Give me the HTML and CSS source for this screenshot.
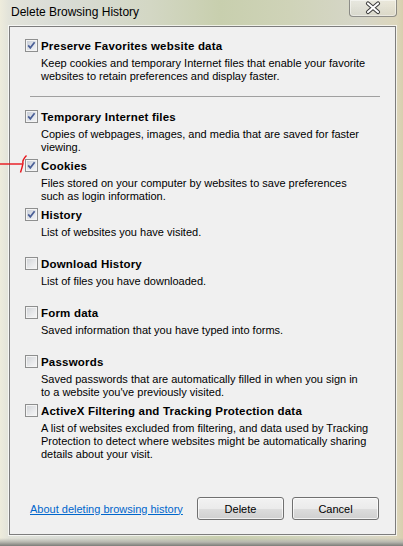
FILE: index.html
```html
<!DOCTYPE html>
<html>
<head>
<meta charset="utf-8">
<link rel="stylesheet" href="styles.css">
</head>
<body>
<div class="window">
  <div class="titlebar">
    <span class="title">Delete Browsing History</span>
    <div class="close">
      <svg width="46" height="16" viewBox="0 0 46 16">
        <path d="M18 3.5 L28 12 M28 3.5 L18 12" stroke="#3a3a3a" stroke-width="4.2" stroke-linecap="round" fill="none"/>
        <path d="M18 3.5 L28 12 M28 3.5 L18 12" stroke="#ffffff" stroke-width="2.2" stroke-linecap="round" fill="none"/>
      </svg>
    </div>
  </div>
  <div class="client">
    <div class="item">
      <span class="cb checked"><svg width="11" height="11" viewBox="0 0 11 11"><path d="M2.2 5.4 L4.3 7.8 L8.6 2.2" stroke="#4a5f97" stroke-width="1.7" fill="none"/></svg></span>
      <div class="label">Preserve Favorites website data</div>
      <div class="desc">Keep cookies and temporary Internet files that enable your favorite<br>websites to retain preferences and display faster.</div>
    </div>
    <div class="sep"></div>
    <div class="item">
      <span class="cb checked"><svg width="11" height="11" viewBox="0 0 11 11"><path d="M2.2 5.4 L4.3 7.8 L8.6 2.2" stroke="#4a5f97" stroke-width="1.7" fill="none"/></svg></span>
      <div class="label">Temporary Internet files</div>
      <div class="desc">Copies of webpages, images, and media that are saved for faster<br>viewing.</div>
    </div>
    <div class="item">
      <span class="cb checked"><svg width="11" height="11" viewBox="0 0 11 11"><path d="M2.2 5.4 L4.3 7.8 L8.6 2.2" stroke="#4a5f97" stroke-width="1.7" fill="none"/></svg></span>
      <div class="label">Cookies</div>
      <div class="desc">Files stored on your computer by websites to save preferences<br>such as login information.</div>
    </div>
    <div class="item">
      <span class="cb checked"><svg width="11" height="11" viewBox="0 0 11 11"><path d="M2.2 5.4 L4.3 7.8 L8.6 2.2" stroke="#4a5f97" stroke-width="1.7" fill="none"/></svg></span>
      <div class="label">History</div>
      <div class="desc">List of websites you have visited.</div>
    </div>
    <div class="item">
      <span class="cb"></span>
      <div class="label">Download History</div>
      <div class="desc">List of files you have downloaded.</div>
    </div>
    <div class="item">
      <span class="cb"></span>
      <div class="label">Form data</div>
      <div class="desc">Saved information that you have typed into forms.</div>
    </div>
    <div class="item">
      <span class="cb"></span>
      <div class="label">Passwords</div>
      <div class="desc">Saved passwords that are automatically filled in when you sign in<br>to a website you've previously visited.</div>
    </div>
    <div class="item">
      <span class="cb"></span>
      <div class="label">ActiveX Filtering and Tracking Protection data</div>
      <div class="desc">A list of websites excluded from filtering, and data used by Tracking<br>Protection to detect where websites might be automatically sharing<br>details about your visit.</div>
    </div>
    <div class="footer">
      <a class="link" href="#">About deleting browsing history</a>
      <div class="buttons">
        <button class="btn">Delete</button>
        <button class="btn">Cancel</button>
      </div>
    </div>
  </div>
  <svg class="arrow" width="30" height="22" viewBox="0 0 30 22">
    <path d="M0 10 L22.5 10" stroke="#e8141b" stroke-width="1.4" fill="none"/>
    <path d="M26.5 1.5 Q22 6 23 9.5 Q22 14 20.5 18.5" stroke="#e8141b" stroke-width="1.4" fill="none"/>
  </svg>
</div>
</body>
</html>
```

FILE: styles.css
```css
html, body {
  margin: 0;
  padding: 0;
}
body {
  width: 403px;
  height: 546px;
  overflow: hidden;
  font-family: "Liberation Sans", Arial, sans-serif;
  font-size: 11px;
  color: #000;
}
.window {
  position: relative;
  width: 403px;
  height: 546px;
  box-sizing: border-box;
  background:
    linear-gradient(180deg, rgba(255,255,255,0) 0px, rgba(255,255,255,0) 538px, #b8b8b0 542px, #7c7c78 546px),
    linear-gradient(90deg, #eeecdc 0px, #e2e3da 9px, #d9dcd6 60px, #d3d7c4 150px, #c8cfae 220px, #cfd3b8 290px, #d6d6c8 360px, #dcd6bc 396px, #d8cfae 403px);
  display: flex;
  flex-direction: column;
}
.titlebar {
  height: 26px;
  display: flex;
  justify-content: space-between;
  align-items: flex-start;
  flex: none;
}
.title {
  font-size: 12px;
  padding: 6px 0 0 11px;
  line-height: 13px;
  color: #000;
}
.close {
  width: 46px;
  height: 16px;
  margin-right: 6px;
  border: 1px solid rgba(70,70,70,0.55);
  border-top: none;
  border-radius: 0 0 4px 4px;
  background: linear-gradient(180deg, rgba(255,255,255,0.45), rgba(220,220,215,0.35));
  box-shadow: inset 0 0 0 1px rgba(255,255,255,0.45);
}
.close svg {
  display: block;
}
.client {
  margin: 0 7px 0 9px;
  height: 509px;
  box-sizing: border-box;
  border: 1px solid #7d7d7d;
  box-shadow: 0 0 0 1px rgba(255,255,255,0.7);
  background: #f0f0f0;
  padding: 12px 0 0 15px;
  display: flex;
  flex-direction: column;
  flex: none;
}
.item {
  height: 49px;
  display: grid;
  grid-template-columns: 13px 1fr;
  grid-template-rows: 14px auto;
  column-gap: 3px;
  align-content: start;
  flex: none;
}
.cb {
  grid-column: 1;
  grid-row: 1;
  width: 13px;
  height: 13px;
  box-sizing: border-box;
  border: 1px solid #8e8f8f;
  background: linear-gradient(135deg, #cfd2d6 0%, #e9eaec 60%, #f7f7f7 100%);
  box-shadow: inset 0 0 0 1px #f4f4f4;
}
.cb.checked {
  background: linear-gradient(135deg, #c3c9d4 0%, #e4e7ec 60%, #f6f7f8 100%);
}
.cb svg {
  display: block;
}
.label {
  grid-column: 2;
  grid-row: 1;
  font-weight: bold;
  font-size: 11.5px;
  letter-spacing: 0.2px;
  line-height: 14px;
  white-space: nowrap;
}
.desc {
  grid-column: 2;
  grid-row: 2;
  margin-top: 4px;
  line-height: 13px;
  white-space: nowrap;
}
.sep {
  height: 1px;
  background: #a0a0a0;
  margin: 8px 15px 13px 5px;
  flex: none;
}
.footer {
  margin-top: 44px;
  height: 23px;
  display: flex;
  align-items: center;
  padding-left: 5px;
  padding-right: 16px;
}
.link {
  color: #0066cc;
  text-decoration: underline;
}
.buttons {
  margin-left: auto;
  display: flex;
  gap: 8px;
}
.btn {
  width: 87px;
  height: 23px;
  box-sizing: border-box;
  border: 1px solid #707070;
  border-radius: 3px;
  background: linear-gradient(180deg, #f2f2f2 0%, #ebebeb 50%, #dddddd 51%, #cfcfcf 100%);
  box-shadow: inset 0 0 0 1px rgba(255,255,255,0.7);
  font-family: "Liberation Sans", Arial, sans-serif;
  font-size: 11px;
  color: #000;
  padding: 0;
}
.arrow {
  position: absolute;
  left: 0;
  top: 154px;
}
```
